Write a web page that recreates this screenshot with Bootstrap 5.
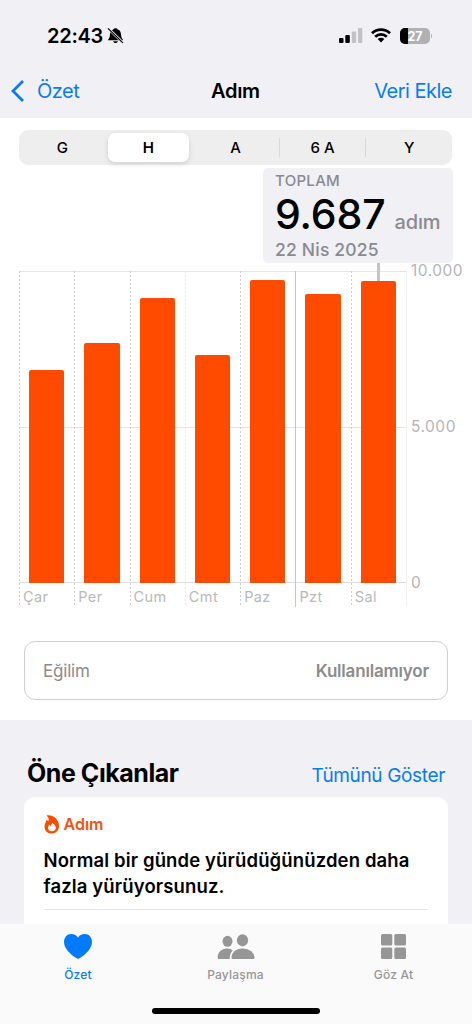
<!DOCTYPE html>
<html lang="tr">
<head>
<meta charset="utf-8">
<meta name="viewport" content="width=device-width, initial-scale=1">
<title>Adım</title>
<link href="https://cdn.jsdelivr.net/npm/bootstrap@5.3.0/dist/css/bootstrap.min.css" rel="stylesheet">
<script src="https://cdn.jsdelivr.net/npm/bootstrap@5.3.0/dist/js/bootstrap.bundle.min.js" defer></script>
<style>
:root { --ios-blue: #087cf8; --ios-orange: #ff4b00; --ios-bg: #f1f0f5; }
body { font-family: Inter, "Liberation Sans", sans-serif; color: #000; background: #fff; width: 472px; height: 1024px; overflow: hidden; line-height: 1; }
svg { display: block; flex: none; }
.screen { height: 1024px; }
.topbar { background: var(--ios-bg); height: 118px; }
.status { height: 70px; padding: 1px 38px 0 47px; }
.clock { font-size: 20px; font-weight: 600; letter-spacing: -.25px; margin-right: 4px; }
.wifi { margin-left: 8px; }
.battery { margin-left: 9px; }
.titlebar { height: 42px; padding: 0 20px 0 10px; display: grid; grid-template-columns: 201px auto 1fr; align-items: center; font-size: 20px; letter-spacing: -.5px; }
.blue { color: var(--ios-blue); }
.heading { font-size: 20px; font-weight: 600; letter-spacing: -.3px; }
.segments { margin: 12px 20px 0 19px; height: 35px; border-radius: 9px; background: #eeeeee; font-size: 15px; font-weight: 450; padding: 3px 0; display: grid; grid-template-columns: repeat(5, 1fr); }
.seg { display: flex; align-items: center; justify-content: center; }
.seg.on { background: #fff; border-radius: 7px; box-shadow: 0 2px 5px rgba(0,0,0,.13); font-weight: 600; margin: 0 3px 0 2px; }
.seg.split { border-left: 1px solid #d9d9d9; margin: 5px 0; }
.callout { width: 190px; height: 95px; margin: 3px 19px 0 auto; padding: 5px 12.500px 5px 12px; border-radius: 5px; background: var(--ios-bg); color: #8b8a8f; }
.c-label { font-size: 15px; font-weight: 500; line-height: 15px; letter-spacing: .3px; }
.c-num { color: #000; font-size: 41px; font-weight: 480; line-height: 53px; letter-spacing: -.1px; }
.c-unit { font-size: 20px; font-weight: 550; letter-spacing: -.1px; }
.c-date { font-size: 17.5px; font-weight: 550; line-height: 18px; letter-spacing: .2px; }
.chart-area { height: 336px; margin: 8px 0 0 19px; }
.plot { width: 388px; background: linear-gradient(#e4e4e4,#e4e4e4) 0 0/100% 1px no-repeat, linear-gradient(#e4e4e4,#e4e4e4) 0 156px/100% 1px no-repeat, linear-gradient(#dedede,#dedede) 0 311px/100% 1px no-repeat; border-right: 1px solid #f0f0f0; }
.day { flex: 1 1 0; background: repeating-linear-gradient(#cdcdcd 0 2px, transparent 2px 4px) 0 0/1px 100% no-repeat; }
.day.faint { background: repeating-linear-gradient(#e9e9e9 0 2px, transparent 2px 4px) 0 0/1px 100% no-repeat; }
.day.week { background: linear-gradient(#c6c6c6,#c6c6c6) 0 0/1px 100% no-repeat; }
.stack { height: 312px; padding-left: 10px; }
.bar { width: 35.3px; background: var(--ios-orange); border-radius: 2px 2px 0 0; position: relative; }
.needle { position: absolute; left: 16px; bottom: 100%; width: 3px; height: 18px; background: #c4c4c7; }
.dayname { padding: 6px 0 0 4px; font-size: 14.5px; line-height: 16px; color: #b9b9b9; letter-spacing: .4px; }
.axis { height: 312px; padding-left: 4px; color: #b5b5b5; font-size: 15.500px; letter-spacing: .5px; }
.axis div { line-height: 16px; margin: -8px 0; }
.trend { margin: 34px 24px 0; height: 59px; border: 1.5px solid #cfcfcf; border-radius: 11px; padding: 2px 18px 0; color: #8c8c8c; font-size: 17px; letter-spacing: -.2px; }
.highlights { margin-top: 20px; height: 204px; background: var(--ios-bg); padding: 0 24px; }
.hl-head { height: 77px; padding: 0 3px; }
.hl-head h2 { font-size: 25px; font-weight: 650; margin: 41px 0 0; letter-spacing: -.45px; line-height: 25px; }
.hl-link { font-size: 19px; letter-spacing: -.35px; margin-top: 46px; line-height: 20px; }
.insight { background: #fff; border-radius: 11px 11px 0 0; height: 127px; padding: 17px 20px 0 19.5px; }
.i-tag { color: #fa5011; font-weight: 600; font-size: 16px; height: 20px; }
.i-text { font-size: 18.500px; font-weight: 600; line-height: 26px; letter-spacing: .13px; margin: 13px 0 10px; white-space: nowrap; }
.i-rule { height: 1px; background: #e6e6e8; }
.tabs { height: 100px; background: #fafafa; position: relative; display: grid; grid-template-columns: 156px 159px 157px; color: #969696; font-size: 12px; font-weight: 450; }
.tab { display: flex; flex-direction: column; align-items: center; padding-top: 9px; }
.tab span { margin-top: 7px; line-height: 15px; letter-spacing: .2px; }
.tab.active-tab { color: var(--ios-blue); font-weight: 500; }
.home-pill { position: absolute; left: 152px; top: 84px; width: 168px; height: 6px; border-radius: 3px; background: #000; }
</style>
</head>
<body>
<div class="screen d-flex flex-column">
  <header class="topbar">
    <div class="status d-flex align-items-center">
      <span class="clock">22:43</span>
      <svg width="17" height="17" viewBox="0 0 18 18"><path d="M1 14c0-1 2-2 2-5 0-4 2-6 4-6.600C7.300 1 10.700 1 11 2.400c2.500.8 4 3 4 6.600 0 3 2 4 2 5z"/><path d="M6.500 15h5c-.7 2.500-4.300 2.500-5 0z"/><path d="M1.300 1.500 17 16.800" stroke="#f1f0f5" stroke-width="2.800"/><path d="M1 1.500 16.800 16.800" stroke="#000" stroke-width="1.300"/></svg>
      <svg class="ms-auto" width="24" height="16" viewBox="0 0 24 16"><rect x="0" y="10" width="4.500" height="5" rx="1"/><rect x="6.300" y="7" width="4.500" height="8" rx="1"/><rect x="12.800" y="3.500" width="4.300" height="11.500" rx="1" fill="#c2c2c5"/><rect x="19" y="0" width="4.300" height="15" rx="1" fill="#c2c2c5"/></svg>
      <svg class="wifi" width="20" height="15" viewBox="0 0 20 15"><path d="M1 5.300a13 13 0 0 1 18 0M4.200 8.800a8.300 8.300 0 0 1 11.600 0" fill="none" stroke="#000" stroke-width="2.700"/><path d="M6.700 11a4.700 4.700 0 0 1 6.600 0L10 14.500z"/></svg>
      <svg class="battery" width="34" height="16" viewBox="0 0 34 16"><defs><clipPath id="cell"><rect width="30" height="16" rx="5"/></clipPath></defs><g clip-path="url(#cell)"><rect width="30" height="16" fill="#b1b1b4"/><rect width="8" height="16"/></g><path d="M31 5.500q2.400 2.500 0 5z" fill="#b1b1b4"/><text x="15" y="12.500" text-anchor="middle" font-size="12.500" font-weight="700" fill="#fff">27</text></svg>
    </div>
    <div class="titlebar">
      <div class="blue d-flex align-items-center"><svg width="15" height="24" viewBox="0 0 15 24"><path d="M13 2 3 12l10 10" fill="none" stroke="currentColor" stroke-width="2.800"/></svg><span class="ms-2 ps-1">Özet</span></div>
      <div class="heading">Adım</div>
      <div class="blue text-end">Veri Ekle</div>
    </div>
  </header>

  <nav class="segments">
    <div class="seg">G</div><div class="seg on">H</div><div class="seg">A</div><div class="seg split">6 A</div><div class="seg split">Y</div>
  </nav>

  <section class="callout">
    <div class="c-label">TOPLAM</div>
    <div class="d-flex justify-content-between align-items-baseline"><span class="c-num">9.687</span><span class="c-unit">adım</span></div>
    <div class="c-date">22 Nis 2025</div>
  </section>

  <section class="chart-area d-flex">
    <div class="plot d-flex">
      <div class="day"><div class="stack d-flex align-items-end"><div class="bar" style="height:68.3%"></div></div><div class="dayname">Çar</div></div>
      <div class="day"><div class="stack d-flex align-items-end"><div class="bar" style="height:77%"></div></div><div class="dayname">Per</div></div>
      <div class="day"><div class="stack d-flex align-items-end"><div class="bar" style="height:91.2%"></div></div><div class="dayname">Cum</div></div>
      <div class="day faint"><div class="stack d-flex align-items-end"><div class="bar" style="height:73.1%"></div></div><div class="dayname">Cmt</div></div>
      <div class="day"><div class="stack d-flex align-items-end"><div class="bar" style="height:97.2%"></div></div><div class="dayname">Paz</div></div>
      <div class="day week"><div class="stack d-flex align-items-end"><div class="bar" style="height:92.7%"></div></div><div class="dayname">Pzt</div></div>
      <div class="day"><div class="stack d-flex align-items-end"><div class="bar" style="height:96.87%"><i class="needle"></i></div></div><div class="dayname">Sal</div></div>
    </div>
    <div class="axis d-flex flex-column justify-content-between"><div>10.000</div><div>5.000</div><div>0</div></div>
  </section>

  <section class="trend d-flex align-items-center justify-content-between"><span>Eğilim</span><span class="fw-semibold">Kullanılamıyor</span></section>

  <section class="highlights">
    <div class="hl-head d-flex justify-content-between align-items-start"><h2>Öne Çıkanlar</h2><span class="blue hl-link">Tümünü Göster</span></div>
    <article class="insight">
      <div class="i-tag d-flex align-items-center"><svg width="16" height="19" viewBox="0 0 16 19"><path fill="#ff4b00" d="M2.500.5C9-.5 15 4.500 15 11c0 4.500-3 7.500-7.500 7.500S.5 15.500.5 11.500C.5 8.500 2.600 7.500 2 5l2.500 1C5 4 4.500 2 2.500.5z"/><path fill="#fff" d="M7.800 7.500c2.500 1.500 4 3.500 4 5.500S10 16.300 7.800 16.300 4 15 4 13c0-1.500.8-2.300 1-3.500l1.300 1.200C7.500 9.800 8.200 9 7.800 7.500z"/></svg><span class="ms-1">Adım</span></div>
      <div class="i-text">Normal bir günde yürüdüğünüzden daha<br>fazla yürüyorsunuz.</div>
      <div class="i-rule"></div>
    </article>
  </section>

  <nav class="tabs">
    <div class="tab active-tab"><svg width="30" height="27" viewBox="0 0 30 27"><path fill="#007aff" d="M15 26C11 24.200 1 17 1 9.300 1 4.500 4 1 8.200 1c3 0 5.500 1.200 6.800 3.700C16.300 2.200 18.800 1 21.800 1 26 1 29 4.500 29 9.300 29 17 19 24.200 15 26z"/></svg><span>Özet</span></div>
    <div class="tab"><svg width="38" height="27" viewBox="0 0 38 27" fill="currentColor"><ellipse cx="10.500" cy="8.300" rx="5" ry="5.500"/><path d="M.7 24.500C.7 20 4 15.600 10 15.600c2.600 0 4.500.8 5.900 2-2.200 1.900-3.200 4.500-3.200 8.400H2C1.200 26 .7 25.500.7 24.500z"/><ellipse cx="25.500" cy="7.300" rx="5.600" ry="6.100"/><path d="M14.500 24.500c0-4.500 4-9 11-9s12 4.500 12 9c0 1-.5 1.500-1.400 1.500H16c-1 0-1.500-.5-1.500-1.500z"/></svg><span>Paylaşma</span></div>
    <div class="tab"><svg width="25" height="27" viewBox="0 0 25 27" fill="currentColor"><rect x="0" y="1" width="11.300" height="11.500" rx="1.500"/><rect x="13.300" y="1" width="11.700" height="11.500" rx="1.500"/><rect x="0" y="14.600" width="11.300" height="11.500" rx="1.500"/><rect x="13.300" y="14.600" width="11.700" height="11.500" rx="1.500"/></svg><span>Göz At</span></div>
    <div class="home-pill"></div>
  </nav>
</div>
</body>
</html>
